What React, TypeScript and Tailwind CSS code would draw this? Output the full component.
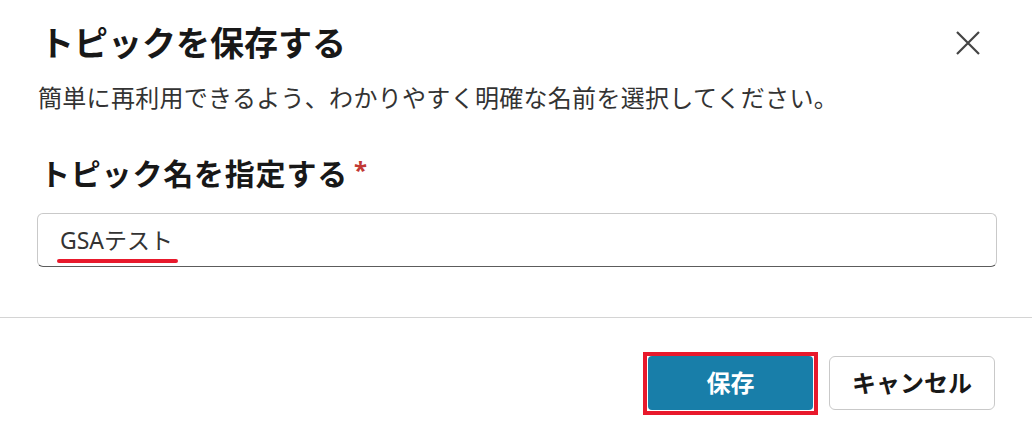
import React from "react";

const font = { fontFamily: '"Noto Sans", "Noto Sans CJK JP", sans-serif' };

export default function App() {
  return (
    <div className="w-[1032px] h-[430px] bg-white text-[#181818] overflow-hidden" style={font}>
      <div className="h-[86px] flex items-center justify-between pl-[40px] pr-[52px]">
        <h1 className="text-[34px] leading-none font-bold text-[#181818]">トピックを保存する</h1>
        <button className="w-[24px] h-[24px] flex items-center justify-center text-[#444]">
          <svg width="24" height="24" viewBox="0 0 24 24" fill="none" stroke="currentColor" strokeWidth="2.2" strokeLinecap="butt">
            <path d="M1 1L23 23M23 1L1 23" />
          </svg>
        </button>
      </div>
      <div className="h-[24px] flex items-center pl-[38px]">
        <p className="text-[24px] leading-none tracking-[0.3px] text-[#333]">簡単に再利用できるよう、わかりやすく明確な名前を選択してください。</p>
      </div>
      <div className="mt-[40px] h-[48px] flex items-center pl-[40px]">
        <span className="text-[30px] leading-none tracking-[0.8px] font-bold text-[#181818]">トピック名を指定する</span>
        <span className="ml-[6px] -mt-[8px] text-[24px] leading-none font-bold text-[#c23934]">*</span>
      </div>
      <div className="mt-[15px] ml-[37px] mr-[35px] h-[54px] relative flex items-center pl-[22px] rounded-[6px] border border-[#c9c9c9] border-b-[#5c5c5c]">
        <span className="text-[23px] leading-none text-[#333]">GSAテスト</span>
        <span className="absolute left-[19px] top-[45px] w-[121px] h-[4px] rounded-full bg-[#e8192c]" />
      </div>
      <div className="mt-[50px] h-px bg-[#d4d4d4]" />
      <div className="mt-[38px] flex justify-end gap-[16px] pr-[37px]">
        <div className="relative">
          <button className="w-[165px] h-[54px] rounded-[4px] bg-[#187ea9] text-white text-[24px] font-bold leading-none flex items-center justify-center">
            保存
          </button>
          <span className="absolute -left-[5px] -right-[5px] -top-[4px] -bottom-[5px] border-[4px] border-[#e8192c]" />
        </div>
        <button className="w-[166px] h-[54px] rounded-[6px] border border-[#c9c9c9] bg-white text-[#181818] text-[24px] font-bold leading-none flex items-center justify-center">
          キャンセル
        </button>
      </div>
    </div>
  );
}
